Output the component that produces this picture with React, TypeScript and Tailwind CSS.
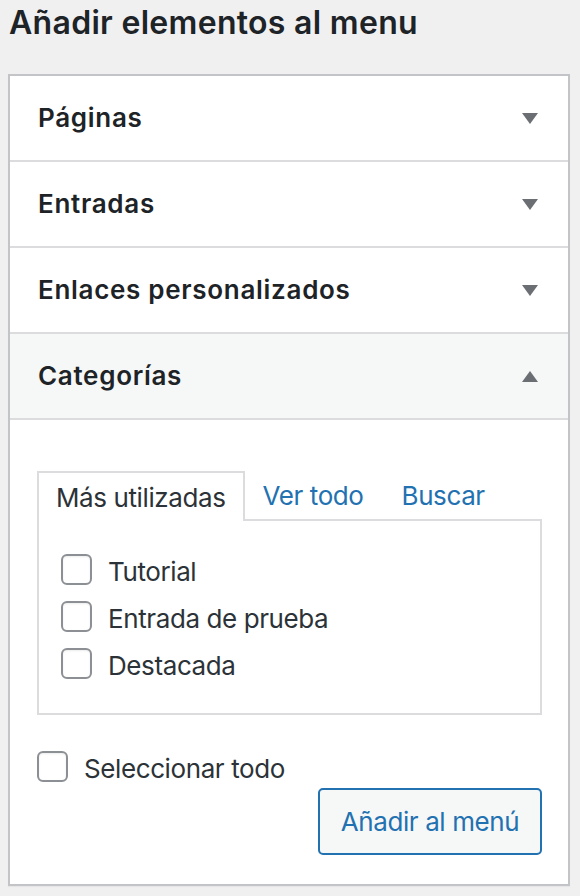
import React from "react";

const sections = ["Páginas", "Entradas", "Enlaces personalizados"];
const cats = ["Tutorial", "Entrada de prueba", "Destacada"];

function Arrow({ up = false }: { up?: boolean }) {
  return (
    <svg width="16" height="11" viewBox="0 0 16 11" className="mr-[10px]">
      {up ? (
        <polygon points="0,11 16,11 8,0" fill="#6b6e73" />
      ) : (
        <polygon points="0,0 16,0 8,11" fill="#6b6e73" />
      )}
    </svg>
  );
}

function Box() {
  return (
    <span className="inline-block h-[31px] w-[31px] shrink-0 rounded-[6px] border-2 border-[#8c8f94] bg-white shadow-[inset_0_1px_2px_rgba(0,0,0,0.08)]" />
  );
}

export default function App() {
  return (
    <div
      className="min-h-screen bg-[#f0f0f1] px-[8px] pt-[3px] text-[#1d2327]"
      style={{ fontFamily: "Inter, 'Noto Sans', sans-serif" }}
    >
      <h2 className="h-[71px] pl-[1px] text-[32px] font-semibold leading-[40px] tracking-[0.3px]">
        Añadir elementos al menu
      </h2>

      <div className="w-[562px] border-2 border-[#c3c4c7] bg-white shadow-[0_1px_1px_rgba(0,0,0,0.04)]">
        {sections.map((s) => (
          <div
            key={s}
            className="flex h-[86px] items-center justify-between border-b-2 border-[#dcdcde] pl-[28px] pr-[20px]"
          >
            <span className="-mt-[1px] text-[26px] font-semibold tracking-[0.7px]">{s}</span>
            <Arrow />
          </div>
        ))}

        <div className="flex h-[86px] items-center justify-between border-b-2 border-[#dcdcde] bg-[#f6f7f7] pl-[28px] pr-[20px]">
          <span className="-mt-[1px] text-[26px] font-semibold tracking-[0.7px]">Categorías</span>
          <Arrow up />
        </div>

        <div className="pb-[29px] pl-[27px] pr-[26px] pt-[51px] text-[26px] tracking-[-0.4px]">
          <div className="flex items-end">
            <div className="relative -mb-[2px] flex h-[50px] items-center border-2 border-b-0 border-[#dcdcde] bg-white px-[17px] text-[#2c3338]">
              Más utilizadas
            </div>
            <span className="flex h-[48px] items-center pl-[18px] text-[#2271b1]">Ver todo</span>
            <span className="flex h-[48px] items-center pl-[38px] text-[#2271b1]">Buscar</span>
          </div>

          <div className="h-[196px] border-2 border-[#dcdcde] bg-white px-[22px] pt-[33px]">
            <div className="flex flex-col gap-[16px]">
              {cats.map((c) => (
                <label key={c} className="flex h-[31px] items-center gap-[16px] text-[#2c3338]">
                  <Box />
                  <span className="mt-[3px]">{c}</span>
                </label>
              ))}
            </div>
          </div>

          <label className="mt-[36px] flex h-[31px] items-center gap-[16px] text-[#2c3338]">
            <Box />
            <span className="mt-[3px]">Seleccionar todo</span>
          </label>

          <div className="mt-[6px] flex justify-end">
            <button className="h-[67px] w-[224px] rounded-[5px] border-2 border-[#2271b1] bg-[#f6f7f7] text-[#2271b1]">
              Añadir al menú
            </button>
          </div>
        </div>
      </div>
    </div>
  );
}
